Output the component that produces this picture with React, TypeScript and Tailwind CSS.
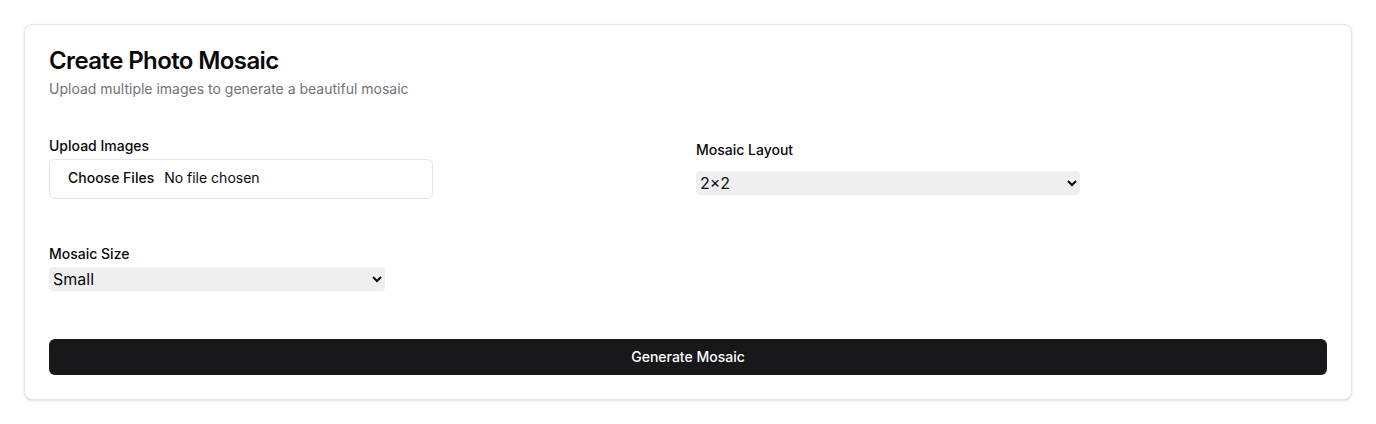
import React from "react";

export default function App() {
  return (
    <div className="bg-white p-6 font-['Inter',sans-serif] text-[#09090b]">
      <div className="rounded-lg border border-[#e4e4e7] bg-white shadow-sm">
        <div className="flex flex-col gap-1.5 p-6">
          <h3 className="text-2xl font-semibold leading-none tracking-tight">Create Photo Mosaic</h3>
          <p className="text-sm text-[#71717a]">Upload multiple images to generate a beautiful mosaic</p>
        </div>
        <div className="px-6 pb-6">
          <div className="grid grid-cols-2 items-center gap-x-4 pt-4">
            <div>
              <label className="block text-sm font-medium leading-none">Upload Images</label>
              <input
                type="file"
                multiple
                className="mt-1.5 flex h-10 w-96 rounded-md border border-[#e4e4e7] bg-white px-3 py-2 text-sm file:mr-1 file:border-0 file:bg-transparent file:px-1.5 file:text-sm file:font-medium"
              />
            </div>
            <div>
              <label className="block text-sm font-medium leading-none">Mosaic Layout</label>
              <select className="mt-[14px] block h-6 w-96 rounded-[4px] bg-[#efefef] text-base">
                <option>2×2</option>
                <option>3×3</option>
                <option>4×4</option>
              </select>
            </div>
          </div>
          <div className="mt-12">
            <label className="block text-sm font-medium leading-none">Mosaic Size</label>
            <select className="mt-1.5 block h-6 w-[336px] rounded-[4px] bg-[#efefef] text-base">
              <option>Small</option>
              <option>Medium</option>
              <option>Large</option>
            </select>
          </div>
          <button className="mt-12 flex h-9 w-full items-center justify-center rounded-md bg-[#18181b] text-sm font-medium text-white">
            Generate Mosaic
          </button>
        </div>
      </div>
    </div>
  );
}
